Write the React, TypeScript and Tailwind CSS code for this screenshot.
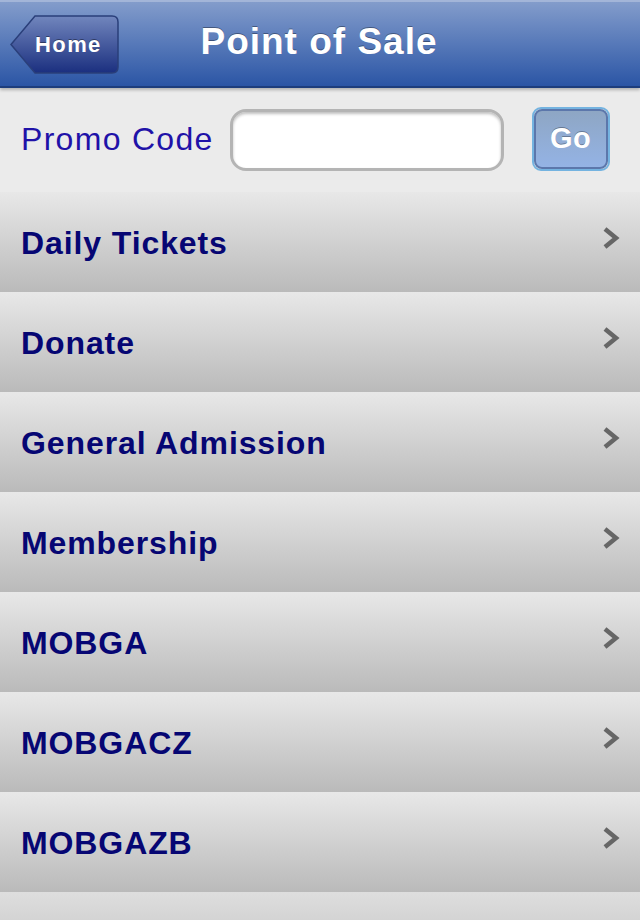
import React from "react";

const items = [
  "Daily Tickets",
  "Donate",
  "General Admission",
  "Membership",
  "MOBGA",
  "MOBGACZ",
  "MOBGAZB",
];

function Chevron() {
  return (
    <svg width="20" height="22" viewBox="0 0 20 22" className="shrink-0 -mt-[8px]">
      <path d="M4 2 L15 11 L4 20" fill="none" stroke="#666666" strokeWidth="4.5" />
    </svg>
  );
}

export default function App() {
  return (
    <div
      className="w-[640px] h-[920px] overflow-hidden bg-[#ebebeb]"
      style={{ fontFamily: '"Liberation Sans", Arial, sans-serif' }}
    >
      {/* Nav bar */}
      <div className="relative h-[88px] bg-gradient-to-b from-[#839ccb] to-[#2b55a5] border-t-2 border-t-[#a3b5d8] border-b-2 border-b-[#1d3d7c] flex items-center justify-center shadow-[0_2px_3px_rgba(0,0,0,0.25)]">
        <div className="absolute left-[10px] top-[13px] h-[59px] w-[109px]">
          <svg width="109" height="59" viewBox="0 0 109 59" className="absolute inset-0">
            <defs>
              <linearGradient id="hb" x1="0" y1="0" x2="0" y2="1">
                <stop offset="0" stopColor="#7186bd" />
                <stop offset="1" stopColor="#1b2f7f" />
              </linearGradient>
            </defs>
            <path
              d="M25 1 H102 Q108 1 108 7 V52 Q108 58 102 58 H25 L1 29.5 Z"
              fill="url(#hb)"
              stroke="#2a3f7a"
              strokeWidth="1.5"
            />
          </svg>
          <span className="absolute left-[25px] top-0 h-[59px] flex items-center text-white font-bold text-[22px] tracking-[1.4px] [text-shadow:0_-1px_0_rgba(0,0,0,0.4)]">
            Home
          </span>
        </div>
        <h1 className="text-white font-bold text-[37px] tracking-[1px] ml-[-2px] -mt-[4px] [text-shadow:0_-1px_0_rgba(0,0,0,0.35)]">
          Point of Sale
        </h1>
      </div>

      {/* Promo code */}
      <div className="h-[104px] flex items-center pl-[21px]">
        <span className="text-[#1f12a8] text-[32px] tracking-[1.3px] -mt-[2px]">Promo Code</span>
        <div className="ml-[16px] w-[274px] h-[62px] rounded-[16px] bg-white border-[3px] border-[#b4b4b4] shadow-[inset_0_2px_3px_rgba(0,0,0,0.25)]" />
        <button className="ml-[28px] -mt-[3px] w-[78px] h-[64px] rounded-[9px] border-2 border-[#74b3e0] p-0">
          <div className="w-full h-full rounded-[8px] border-2 border-[#5c77ab] bg-gradient-to-b from-[#8ea6c4] to-[#94b3e5] flex items-center justify-center text-white font-bold text-[29px] tracking-[0.5px] [text-shadow:0_-1px_0_rgba(0,0,0,0.3)]">
            Go
          </div>
        </button>
      </div>

      {/* List */}
      <div className="flex flex-col">
        {items.map((label) => (
          <div
            key={label}
            className="h-[100px] shrink-0 flex items-center justify-between pl-[21px] pr-[19px] bg-gradient-to-b from-[#e8e8e8] to-[#bababa]"
          >
            <span className="text-[#060673] font-bold text-[32px] tracking-[0.9px] mt-[2px]">{label}</span>
            <Chevron />
          </div>
        ))}
        <div className="h-[100px] shrink-0 bg-gradient-to-b from-[#dedede] to-[#bababa]" />
      </div>
    </div>
  );
}
